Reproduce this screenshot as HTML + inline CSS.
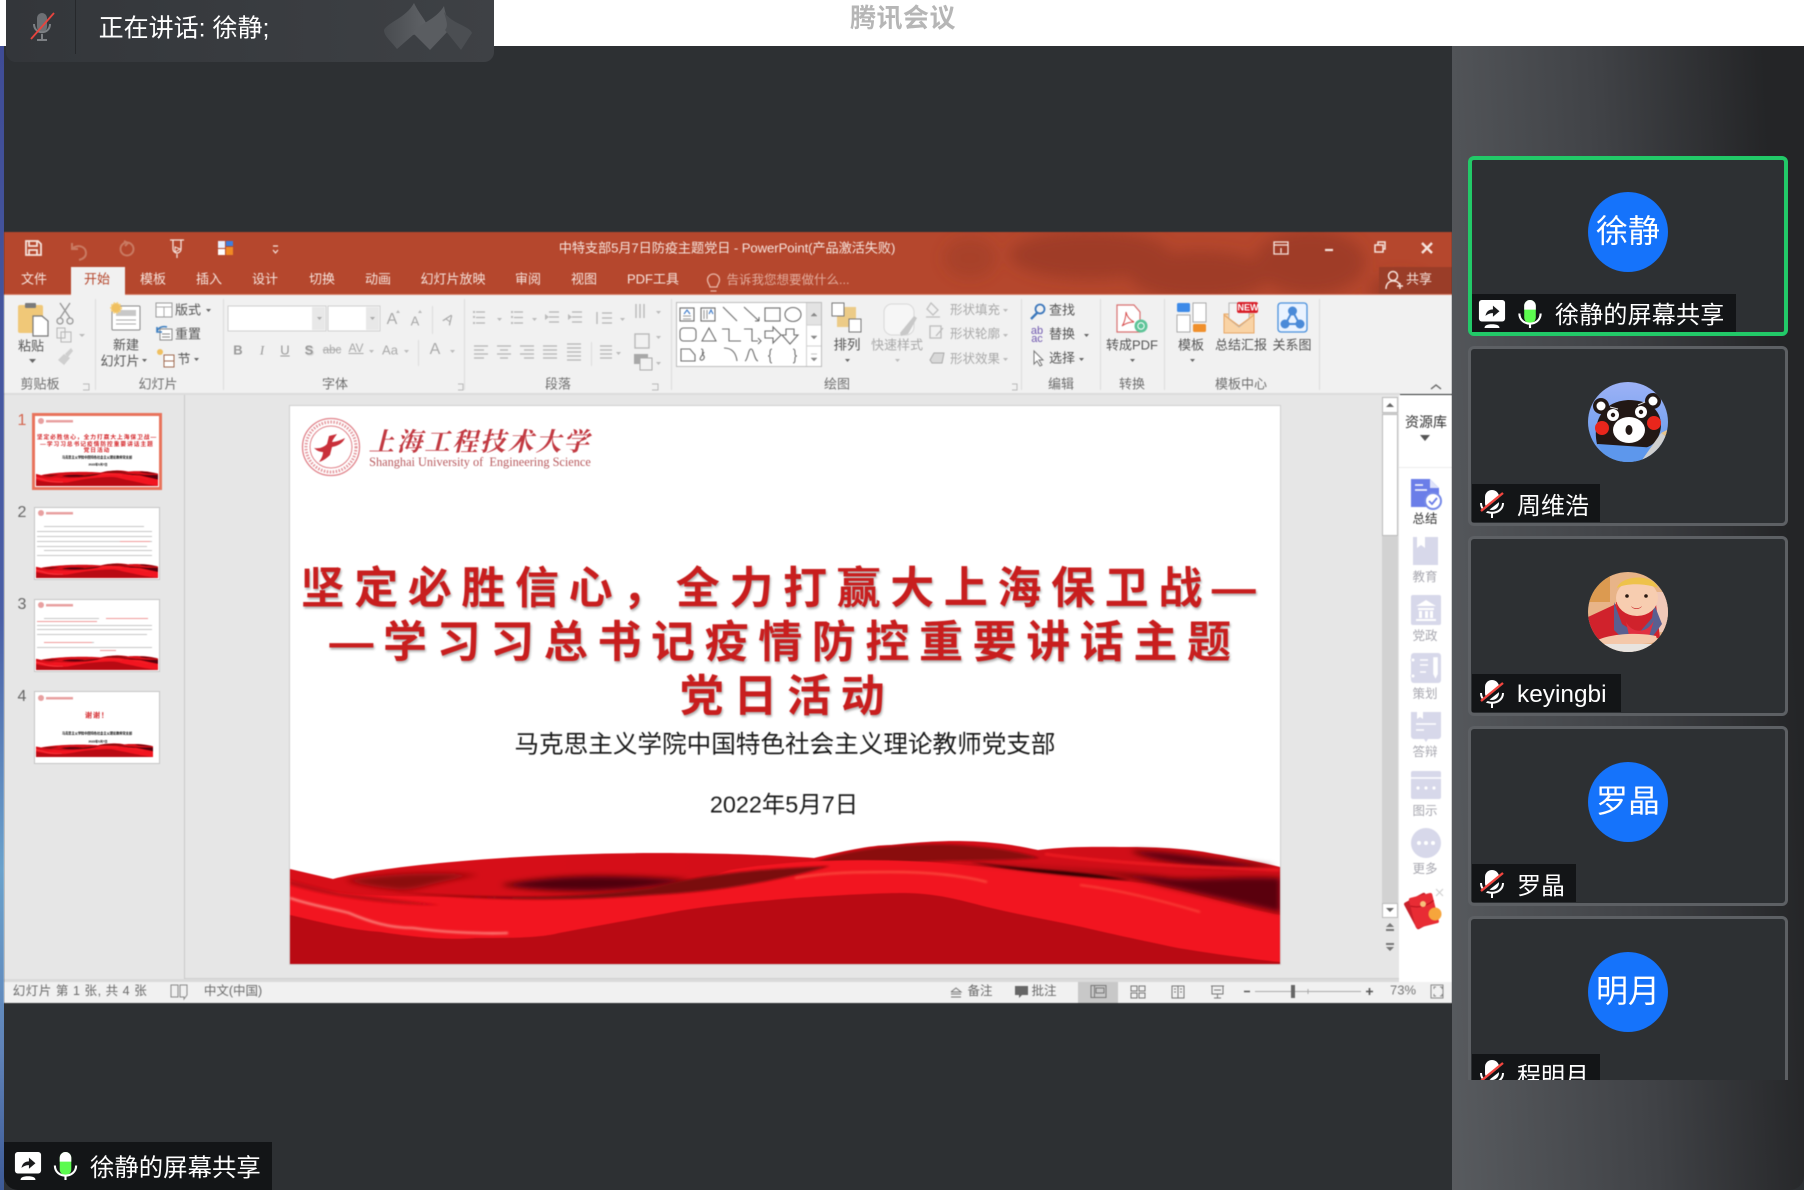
<!DOCTYPE html>
<html lang="zh-CN"><head><meta charset="utf-8"><title>腾讯会议</title>
<style>
html,body{margin:0;padding:0;background:#2d3033}
body{position:relative;width:1804px;height:1190px;overflow:hidden;font-family:"Liberation Sans","Noto Sans CJK SC",sans-serif}
.a{position:absolute}
.t{position:absolute;transform:translate(-50%,-50%);white-space:nowrap;line-height:1}
#ppt .t{font-size:13px;color:#555}
#ppt .g{color:#a9a9a9}
#ppt .w{color:#f6e3dc}
#ppt .l{font-size:13px;color:#6f6f6f}
.card{position:absolute;left:1468px;width:320px;height:180px;box-sizing:border-box;border:3px solid #5d6064;border-radius:6px;background:#2d3033}
.name{position:absolute;left:1472px;background:#131517;height:38px}
.n{position:absolute;transform:translateY(-50%);color:#fff;font-size:24px;white-space:nowrap;line-height:1}
.av{position:absolute;left:1588px;width:80px;height:80px;border-radius:50%;background:#1573fb;color:#fff;font-size:32px;text-align:center;line-height:78px}
</style></head><body>
<svg width="0" height="0" style="position:absolute"><defs>
<linearGradient id="up" x1="0" x2="1" y1="0" y2="0"><stop offset="0" stop-color="#d80f18"/><stop offset=".5" stop-color="#d40e18"/><stop offset="1" stop-color="#d00e18"/></linearGradient>
<filter id="b2" x="-30%" y="-100%" width="160%" height="300%"><feGaussianBlur stdDeviation="3"/></filter>
<filter id="b1" x="-20%" y="-100%" width="140%" height="300%"><feGaussianBlur stdDeviation="1"/></filter>
<filter id="b8" x="-20%" y="-50%" width="140%" height="200%"><feGaussianBlur stdDeviation="7"/></filter>
<symbol id="wave" viewBox="290 838 990 126" preserveAspectRatio="none">
<path d="M290 869L333 879C380 866 520 853 655 853C720 853 770 855 814 858C840 852 870 845 891 845C920 842 940 841 955 841C990 841 1015 845 1038 850C1070 846 1100 847 1127 847C1160 847 1190 849 1210 853C1240 858 1260 862 1280 867V964H290Z" fill="url(#up)"/>
<path d="M345 880C400 872 440 872 480 875C440 880 420 890 400 890C380 888 360 885 345 880Z" fill="#8c0810" filter="url(#b2)"/>
<path d="M500 885C560 874 610 874 690 880C640 892 560 895 500 885Z" fill="#4f0408" filter="url(#b2)"/>
<path d="M827 858C870 845 930 843 960 845C1000 848 1020 852 1040 858C990 862 930 858 880 866C850 872 820 885 780 892C760 893 800 870 827 858Z" fill="#8a0810" filter="url(#b1)"/>
<path d="M1130 851C1170 850 1210 860 1275 866C1230 870 1160 865 1130 851Z" fill="#5a0508" filter="url(#b2)"/>
<path d="M290 880C340 900 400 895 500 898C600 900 670 890 730 870C790 860 860 858 930 862C1000 868 1100 878 1150 884C1200 894 1240 908 1280 915V964H290Z" fill="#f21520"/>
<path d="M395 892C480 898 570 900 650 888C720 870 790 868 830 866C780 880 720 892 650 895C560 902 480 900 395 892Z" fill="#7a0810" filter="url(#b1)"/>
<path d="M955 862C1010 868 1100 870 1140 880C1170 888 1230 900 1280 912V878C1240 876 1200 880 1170 878C1100 870 1010 866 955 862Z" fill="#5a0508" filter="url(#b2)"/>
<path d="M970 862C1030 870 1080 870 1130 880C1090 878 1020 872 970 862Z" fill="#2a0204" filter="url(#b1)"/>
<path d="M1045 854C1100 862 1200 868 1280 870" stroke="#f01a20" stroke-width="2.500" fill="none" filter="url(#b1)"/>
<path d="M290 880L340 893L440 905C400 905 340 900 290 885Z" fill="#c00c14" filter="url(#b1)"/>
<path d="M290 915C320 922 350 930 381 932C420 938 450 940 476 938C510 938 540 938 559 933C600 925 630 920 668 913C710 905 750 902 795 898C840 895 880 893 904 893C935 893 960 900 987 907C1020 915 1050 920 1082 927C1115 935 1150 942 1178 948C1220 955 1260 960 1280 962V964H290Z" fill="#b90a13"/>
<path d="M290 898C310 905 330 908 349 913C370 922 390 928 413 928C440 932 480 934 508 933" stroke="#ffb4a4" stroke-width="1.600" fill="none" filter="url(#b1)"/>
<path d="M795 878C830 872 860 872 891 872C925 872 960 875 987 882" stroke="#ff6048" stroke-width="1.600" fill="none" filter="url(#b1)"/>
<path d="M1080 885C1120 890 1160 900 1200 912" stroke="#ff5a44" stroke-width="1.200" fill="none" filter="url(#b1)"/>
</symbol>
<symbol id="muted" viewBox="0 0 24 28">
<path d="M5 7a7 7 0 0 1 14 0v6a7 7 0 0 1-14 0Z" fill="#fff"/><path d="M1 13c0 13 22 13 22 0" stroke="#fff" stroke-width="2" fill="none"/><path d="M12 23v5" stroke="#fff" stroke-width="2"/><path d="M1 24L24 6" stroke="#131517" stroke-width="3.500"/><path d="M1 21L23 3" stroke="#f2453f" stroke-width="2.400"/>
</symbol>
<symbol id="share" viewBox="0 0 28 30">
<rect x="0" y="0" width="28" height="23" rx="3" fill="#fff"/><path d="M7 17c1-5 4-7 8-7V6l7 6-7 6v-4c-3 0-6 1-8 3Z" fill="#1a1b1d"/><path d="M6 30c0-3 3-4 8-4s8 1 8 4Z" fill="#fff"/>
</symbol>
<symbol id="mic" viewBox="0 0 24 29">
<path d="M6 6a6 6 0 0 1 12 0v12a6 6 0 0 1-12 0Z" fill="#5cfb4f"/><path d="M6 10V6a6 6 0 0 1 12 0v4Z" fill="#fff"/><path d="M1 14c0 14 22 14 22 0" stroke="#fff" stroke-width="2.200" fill="none"/><path d="M12 24v5" stroke="#fff" stroke-width="2.200"/>
</symbol>
</defs></svg>

<!-- top white / left edge -->
<div class="a" style="left:0;top:0;width:1804px;height:46px;background:#fff"></div>
<div class="a" style="left:0;top:46px;width:4px;height:1144px;background:linear-gradient(180deg,#3f4c96,#4b5fa6 50%,#6aa2cc 72%,#5f82b8 88%,#3d5a96)"></div>
<div class="t" style="left:903px;top:18px;font-size:26px;color:#b6b6b6;font-weight:700;letter-spacing:.5px">腾讯会议</div>

<!-- toast -->
<div class="a" style="left:6px;top:0;width:488px;height:62px;background:linear-gradient(90deg,#33363a,#3e4145);border-radius:0 0 10px 10px"></div>
<div class="a" style="left:75px;top:0;width:1px;height:54px;background:#26282b"></div>
<svg class="a" style="left:28px;top:10px" width="28" height="32" viewBox="0 0 28 32"><path d="M9 8a5 5 0 0 1 10 0v9a5 5 0 0 1-10 0Z" fill="#6d7074"/><path d="M6 14c0 11 16 11 16 0M14 24v5M9 30h10" stroke="#7d8084" stroke-width="2" fill="none"/><path d="M3 29L26 3" stroke="#e8443e" stroke-width="1.800"/></svg>
<div class="t" style="left:184px;top:29px;font-size:25px;color:#fff">正在讲话: 徐静;</div>
<svg class="a" style="left:380px;top:0" width="96" height="54" viewBox="380 0 96 54"><defs><linearGradient id="lf" x1="0" x2="1"><stop offset="0" stop-color="#484b4f"/><stop offset="1" stop-color="#606367"/></linearGradient></defs><path d="M414 3C420 16 430 24 428 32L413 35L397 49C390 40 384 36 384 30C388 22 406 18 414 3Z" fill="url(#lf)"/><path d="M444 6C446 18 450 22 449 30L430 50L413 33C418 24 436 20 444 6Z" fill="#5a5d61"/><path d="M444 12C452 24 470 26 472 33L461 50L445 30C449 26 446 20 444 12Z" fill="#4b4e52"/></svg>

<!-- PPT -->
<div id="ppt" class="a" style="left:0;top:0;width:1804px;height:1190px;filter:blur(.55px)">
<div class="a" style="left:4px;top:232px;width:1448px;height:62px;background:#b5472d;overflow:hidden"></div>
<svg class="a" style="left:0;top:232px" width="1452" height="62" viewBox="0 232 1452 62"><g fill="#9c3b26" filter="url(#b8)" opacity=".85"><ellipse cx="970" cy="258" rx="26" ry="20" opacity=".6"/><ellipse cx="1090" cy="255" rx="80" ry="24"/><ellipse cx="1200" cy="275" rx="70" ry="24"/><ellipse cx="1310" cy="262" rx="55" ry="32"/><ellipse cx="1400" cy="290" rx="30" ry="16"/></g></svg>
<div class="a" style="left:71px;top:267px;width:54px;height:28px;background:#f1f1f1"></div>
<div class="a" style="left:4px;top:294px;width:1448px;height:100px;background:#f1f1f1;border-top:1px solid #d8836f;box-sizing:border-box"></div>
<div class="a" style="left:71px;top:293px;width:54px;height:3px;background:#f1f1f1"></div>
<div class="a" style="left:1379px;top:267px;width:73px;height:27px;background:#9a3d28"></div>
<div class="a" style="left:4px;top:393px;width:1396px;height:589px;background:#e6e6e6;border-top:2px solid #dcdcdc;box-sizing:border-box"></div>
<div class="a" style="left:184px;top:395px;width:1px;height:584px;background:#c9c9c9"></div>
<div class="a" style="left:185px;top:978px;width:1214px;height:1px;background:#cfcfcf"></div>
<div class="a" style="left:4px;top:979px;width:1395px;height:3px;background:#dadada"></div>
<div class="a" style="left:4px;top:982px;width:1448px;height:21px;background:#f1f1f1"></div>
<div class="a" style="left:1399px;top:395px;width:53px;height:587px;background:#fff"></div>

<!-- title bar text -->
<div class="t w" style="left:727px;top:248px;font-size:13.200px;letter-spacing:-.1px">中特支部5月7日防疫主题党日 - PowerPoint(产品激活失败)</div>
<div class="t w" style="left:34px;top:279px">文件</div><div class="t" style="left:97px;top:279px;color:#b5472d">开始</div>
<div class="t w" style="left:153px;top:279px">模板</div><div class="t w" style="left:209px;top:279px">插入</div><div class="t w" style="left:265px;top:279px">设计</div><div class="t w" style="left:322px;top:279px">切换</div><div class="t w" style="left:378px;top:279px">动画</div><div class="t w" style="left:453px;top:279px">幻灯片放映</div><div class="t w" style="left:528px;top:279px">审阅</div><div class="t w" style="left:584px;top:279px">视图</div><div class="t w" style="left:653px;top:279px">PDF工具</div>
<div class="t" style="left:788px;top:280px;color:#e2ab9b;font-size:12.500px">告诉我您想要做什么...</div>
<div class="t w" style="left:1419px;top:279px">共享</div>

<!-- ribbon + chrome icons -->
<svg class="a" style="left:0;top:0" width="1452" height="1010" viewBox="0 0 1452 1010" fill="none">
<g stroke="#f6e3dc" stroke-width="1.800">
<path d="M26 241h12l3 3v11H26Z"/><path d="M29 241v5h8v-5M29 255v-5h8v5"/>
<path d="M1274 242h14v12h-14Z" stroke-width="1.300"/><path d="M1274 245h14M1281 253v-5" stroke-width="1.300"/>
<path d="M1325 250h8" stroke-width="2.200"/>
<path d="M1375 245h8v7h-8ZM1378 245v-3h7v7h-2" stroke-width="1.500"/>
<path d="M1422 243l10 10M1432 243l-10 10" stroke-width="2.400"/>
<path d="M170 240h14M173 240v9a4 4 0 0 0 8 0v-9M177 254v4" stroke-width="1.300"/><path d="M175 247l5 2-5 3Z" stroke-width="1"/>
<path d="M273 246h5M273 250l2.500 3 2.500-3" stroke-width="1.200"/>
<circle cx="1393" cy="276" r="4.500" stroke-width="1.500"/><path d="M1386 289c0-5 3-8 7-8s7 2 7 6M1397 286h6M1400 283v6" stroke-width="1.500"/>
</g>
<g stroke="#c97a62" stroke-width="2"><path d="M73 248c6-4 13-1 13 5 0 4-3 6-7 7M72 243v6h6"/><circle cx="127" cy="249" r="6.500"/><path d="M124 241l4 2-3 3"/></g>
<rect x="218" y="241" width="7" height="7" fill="#e8f0ff"/><rect x="226" y="241" width="7" height="5" fill="#3c7ee0"/><rect x="218" y="249" width="7" height="6" fill="#fff"/><rect x="226" y="247" width="7" height="8" fill="#f08a24"/>
<path d="M714 274a6 6 0 0 1 6 6c0 3-2 4-2.500 7h-7c-.500-3-2.500-4-2.500-7a6 6 0 0 1 6-6ZM711 291h6" stroke="#eab8a8" stroke-width="1.300" transform="translate(-.5 0)"/>

<!-- dividers -->
<g stroke="#dcdcdc"><path d="M95.500 299v91M223.500 299v91M464.500 299v91M671.500 299v91M1021.500 299v91M1100.500 299v91M1164.500 299v91M1319.500 299v91M432.500 306v28M418.500 340v26M591.500 342v24"/></g>
<!-- launchers -->
<g stroke="#a0a0a0"><path d="M83 384h6v6h-6M652 384h6v6h-6M458 384h5v6h-5M1012 384h5v6h-5" opacity=".7"/></g>

<!-- clipboard group -->
<rect x="18" y="305" width="25" height="28" rx="2" fill="#f0c878"/><rect x="25" y="303" width="11" height="5" rx="1" fill="#7a7a7a"/><path d="M33 316h9l6 5v15H33Z" fill="#fff" stroke="#777" stroke-width="1.200"/>
<path d="M60 303l10 15M70 303l-10 15" stroke="#999" stroke-width="1.400"/><circle cx="60" cy="321" r="3" stroke="#999" stroke-width="1.300"/><circle cx="70" cy="321" r="3" stroke="#999" stroke-width="1.300"/>
<path d="M57 328h8v10h-8ZM61 332h10v10H61Z" stroke="#b5b5b5" fill="#f1f1f1"/><path d="M79 334h6l-3 3Z" fill="#bbb"/>
<path d="M58 360l6-6 6 4-6 7ZM65 354l6-6 2 3-5 6" fill="#cfcfcf"/><path d="M29 359h7l-3.500 4Z" fill="#666"/>
<!-- slides group -->
<rect x="112" y="306" width="28" height="24" rx="1" fill="#fff" stroke="#888"/><rect x="116" y="310" width="20" height="6" fill="#c8c8c8"/><path d="M116 320h20M116 324h20" stroke="#aaa"/>
<circle cx="116" cy="308" r="5" fill="#f0c060" stroke="#f5d080" stroke-dasharray="1.500 1.500" stroke-width="2"/>
<rect x="156" y="303" width="16" height="14" fill="#fff" stroke="#999"/><path d="M156 307h16M164 307v10" stroke="#aaa"/>
<rect x="160" y="329" width="12" height="11" fill="#fff" stroke="#888"/><path d="M157 331c2-4 6-5 10-4M157 327v5h5" stroke="#3c7ec0" stroke-width="1.600"/><path d="M162 334h8M162 337h8" stroke="#888"/>
<circle cx="160" cy="352" r="3" fill="#f0c060"/><rect x="164" y="355" width="10" height="12" fill="#fff" stroke="#a06a50"/><path d="M164 361h10" stroke="#a06a50"/>
<path d="M206 309h5l-2.500 3ZM142 359h5l-2.500 3ZM194 358h5l-2.500 3Z" fill="#666"/>
<!-- font group -->
<rect x="228" y="306" width="98" height="25" fill="#fff" stroke="#d0d0d0"/><rect x="312" y="307" width="13" height="23" fill="#e8e8e8"/><rect x="328" y="306" width="52" height="25" fill="#fff" stroke="#d0d0d0"/><rect x="366" y="307" width="13" height="23" fill="#e8e8e8"/>
<path d="M317 317h5l-2.500 3ZM370 317h5l-2.500 3Z" fill="#aaa"/>
<path d="M369 350h5l-2.500 3ZM404 350h5l-2.500 3ZM450 350h5l-2.500 3ZM396 313l2-3 2 3ZM418 313l2-3 2 3ZM497 318h5l-2.500 3ZM532 318h5l-2.500 3ZM620 318h5l-2.500 3ZM656 311h5l-2.500 3ZM656 336h5l-2.500 3ZM616 352h5l-2.500 3ZM656 362h5l-2.500 3Z" fill="#bbb"/>
<!-- paragraph group -->
<g stroke="#b5b5b5" stroke-width="1.300"><path d="M476 312h9M476 317.500h9M476 323h9M514 312h9M514 317.500h9M514 323h9M549 312h10M549 317h10M549 322h10M572 312h10M572 317h10M572 322h10M602 313h10M602 318h10M602 323h10"/>
<path d="M474 346h14M474 350h10M474 354h14M474 358h10M497 346h14M500 350h8M497 354h14M500 358h8M520 346h14M524 350h10M520 354h14M524 358h10M543 346h14M543 350h14M543 354h14M543 358h14M567 344h14M567 348h14M567 352h14M567 356h14M567 360h14M600 346h12M600 350h12M600 354h12M600 358h12"/>
<path d="M597 312v12M636 304v14M640 304v14M644 304v14M635 334h14v14h-14Z"/></g>
<g fill="#bbb"><rect x="473" y="311" width="2" height="2"/><rect x="473" y="316" width="2" height="2"/><rect x="473" y="322" width="2" height="2"/><rect x="511" y="311" width="2" height="2"/><rect x="511" y="316" width="2" height="2"/><rect x="511" y="322" width="2" height="2"/><path d="M549 317l-4-3v6ZM568 314l4 3-4 3Z"/></g>
<rect x="634" y="354" width="14" height="10" fill="#a8a8a8"/><rect x="640" y="358" width="12" height="12" fill="#f1f1f1" stroke="#aaa"/>
<!-- shapes gallery -->
<rect x="676.500" y="302.500" width="145" height="64" fill="#fff" stroke="#bdbdbd"/><rect x="806" y="303" width="15" height="22" fill="#e3e3e3"/><path d="M806.500 303v63M806 325h15M806 346h15" stroke="#d0d0d0"/>
<path d="M811 316h6l-3-3ZM811 336h6l-3 3ZM811 354h6M811 358h6l-3 3Z" fill="#888" stroke="#888" stroke-width=".5"/>
<g stroke="#6e6e6e" stroke-width="1.100">
<rect x="680" y="308" width="14" height="13" fill="#fff"/><path d="M683 316h8M683 319h8" stroke="#999"/><path d="M684 314l3-4 3 4" stroke="#3a78c8"/>
<rect x="701" y="308" width="14" height="13"/><path d="M704 310v9M707 310v9" stroke="#999"/><path d="M709 314l2-4 2 4" stroke="#3a78c8"/>
<path d="M723 307l14 14M744 307l15 14M759 321v-4M759 321h-4"/><rect x="765" y="308" width="15" height="13"/><ellipse cx="793" cy="314.500" rx="8" ry="7"/>
<rect x="680" y="328" width="16" height="13" rx="3.500"/><path d="M709 328l-7 13h14ZM722 329h7v12h12M744 329h8v12h6M758 338l3 3-3 3M765 331h8v-4l8 8-8 8v-5h-8ZM786 329h8v6h4l-8 9-8-9h4Z"/>
<path d="M681 350h9l5 6v6h-14ZM701 350c4 0 0 5 2 6 3 2 0 6-2 5-3-1 2-5 3-8M724 349c8 0 12 5 13 13M745 362c3-1 3-12 6-12s3 11 7 12M772 350c-2 0-2 2-2 5 0 2-2 2-2 2s2 0 2 2c0 3 0 5 2 5M793 350c2 0 2 2 2 5 0 2 2 2 2 2s-2 0-2 2c0 3 0 5-2 5" transform="translate(0 -1)"/>
</g>
<!-- arrange -->
<rect x="837" y="307" width="19" height="20" fill="#eccb87"/><rect x="832" y="303" width="12" height="13" fill="#fff" stroke="#777"/><rect x="849" y="319" width="12" height="13" fill="#fff" stroke="#777"/>
<path d="M845 359h5l-2.500 3Z" fill="#666"/>
<rect x="884" y="304" width="30" height="31" rx="8" fill="#f6f6f6" stroke="#d8d8d8"/><path d="M900 333l14-17 3 2-9 16-7 2Z" fill="#c8c8c8"/><path d="M895 359h5l-2.500 3Z" fill="#bbb"/>
<path d="M931 303l7 7-5 5-6-6ZM926 317h14" stroke="#c0c0c0" stroke-width="1.300"/>
<path d="M930 326h11v12h-11ZM936 336l7-8" stroke="#bbb" stroke-width="1.300"/>
<path d="M930 360l4-7h10l-2 10h-10Z" fill="#d8d8d8" stroke="#aaa"/>
<path d="M1003 309h5l-2.500 3ZM1003 334h5l-2.500 3ZM1003 358h5l-2.500 3Z" fill="#bbb"/>
<!-- editing -->
<circle cx="1040" cy="309" r="4.500" stroke="#3d78bc" stroke-width="1.800"/><path d="M1037 313l-6 6" stroke="#3d78bc" stroke-width="2.400"/>
<path d="M1034 359l0 13 3-3 3 5 2-1-3-5h4Z" transform="translate(0 -8)" fill="#fff" stroke="#777"/>
<path d="M1084 334h5l-2.500 3ZM1079 358h5l-2.500 3Z" fill="#666"/>
<path d="M1117 305h17l6 7v20h-23Z" fill="#fff" stroke="#d87070" stroke-width="1.200"/><path d="M1122 326c3-4 4-11 4-14 1 5 4 8 8 10-4 0-8 1-12 4Z" stroke="#d85050"/><circle cx="1141" cy="326" r="6.500" fill="#5ec498"/><circle cx="1141" cy="326" r="3.200" stroke="#fff"/>
<path d="M1130 359h5l-2.500 3Z" fill="#666"/>
<!-- template -->
<rect x="1177" y="303" width="13" height="9" rx="1.500" fill="#3d8ae8"/><rect x="1193" y="303" width="13" height="19" fill="#fff" stroke="#aaa"/><rect x="1177" y="315" width="13" height="17" fill="#fff" stroke="#aaa"/><rect x="1193" y="324" width="13" height="8" rx="1.500" fill="#f0902c"/>
<path d="M1190 359h5l-2.500 3Z" fill="#666"/>
<rect x="1224" y="314" width="30" height="19" fill="#f9d3a5" stroke="#e8a868"/><path d="M1229 303h20v16l-10 8-10-8Z" fill="#f3f3f3" stroke="#b8b8b8"/><path d="M1224 315l15 11 15-11" stroke="#e8a868" stroke-width="1.300"/>
<rect x="1237" y="302" width="21" height="11" rx="2" fill="#d81e28"/>
<rect x="1278" y="303" width="29" height="29" rx="3" fill="#eaf3ff" stroke="#4a90dc" stroke-width="1.300"/><path d="M1292.500 311l-7 13h14Z" stroke="#4a8ad8" stroke-width="2"/><circle cx="1292.500" cy="311" r="4.500" fill="#4a8ad8"/><circle cx="1285" cy="324" r="4.500" fill="#4a8ad8"/><circle cx="1300" cy="324" r="4.500" fill="#4a8ad8"/>
<path d="M1431 389l5-4 5 4" stroke="#666" stroke-width="1.400"/>
<!-- scroll -->
<rect x="1382" y="397" width="16" height="520" fill="#d2d2d2"/><rect x="1382.500" y="397.500" width="15" height="15" fill="#fff" stroke="#bbb"/><rect x="1382.500" y="414.500" width="15" height="121" fill="#fff" stroke="#bbb"/><rect x="1382.500" y="903.500" width="15" height="14" fill="#fff" stroke="#bbb"/>
<path d="M1386 407h8l-4-4ZM1386 908h8l-4 4Z" fill="#666"/><path d="M1386 927h8l-4-4ZM1386 929h8v2h-8ZM1386 943h8v2h-8ZM1386 947h8l-4 4Z" fill="#777"/>
<!-- status icons -->
<g stroke="#888"><path d="M171 985h7v12h-7ZM180 985h7v10l-3 4v-2h-4Z" fill="none"/><path d="M951 992l5-4 5 4h-10M951 994h10M951 997h10" stroke="#777"/></g>
<path d="M1015 986h13v9h-6l-3 3v-3h-4Z" fill="#666"/>
<rect x="1078" y="982" width="40" height="21" fill="#c8c8c8"/>
<path d="M1091 985.500h15v12h-15ZM1094.500 985.500v12M1096 988h8v5h-8ZM1131 986h6v5h-6ZM1139 986h6v5h-6ZM1131 993h6v5h-6ZM1139 993h6v5h-6ZM1172 986h12v12h-12ZM1178 986v12M1174 989h2M1174 992h2M1180 989h2M1180 992h2M1211 986h13M1212 986v8h11v-8M1217.500 994v4M1214 998h7M1214 990h7" stroke="#777" fill="none"/>
<path d="M1244 991.500h6M1366 991.500h7M1369.500 988v7" stroke="#555" stroke-width="1.600"/><path d="M1255 991.500h106M1308 989v5" stroke="#aaa"/><rect x="1291" y="985" width="4" height="13" fill="#666"/>
<path d="M1431 985h12v13h-12ZM1434 989v-2h2M1440 987h2v2M1434 994v2h2M1442 994v2h-2" stroke="#888"/>
</svg>

<!-- ribbon labels -->
<div class="t l" style="left:40px;top:384px">剪贴板</div><div class="t l" style="left:158px;top:384px">幻灯片</div><div class="t l" style="left:335px;top:384px">字体</div><div class="t l" style="left:558px;top:384px">段落</div><div class="t l" style="left:837px;top:384px">绘图</div><div class="t l" style="left:1061px;top:384px">编辑</div><div class="t l" style="left:1132px;top:384px">转换</div><div class="t l" style="left:1241px;top:384px">模板中心</div>
<div class="t" style="left:31px;top:346px">粘贴</div><div class="t" style="left:126px;top:345px">新建</div><div class="t" style="left:120px;top:361px">幻灯片</div>
<div class="t" style="left:188px;top:310px">版式</div><div class="t" style="left:188px;top:334px">重置</div><div class="t" style="left:184px;top:359px">节</div>
<div class="t g" style="left:392px;top:320px;font-size:16px">A</div><div class="t g" style="left:415px;top:321px;font-size:13px">A</div><div class="t g" style="left:449px;top:319px;font-size:14px;transform:translate(-50%,-50%) rotate(35deg)">A</div>
<div class="t g" style="left:238px;top:350px;font-weight:700;color:#999">B</div><div class="t g" style="left:262px;top:350px;font-style:italic;font-family:'Liberation Serif';color:#999">I</div><div class="t g" style="left:285px;top:350px;color:#999;text-decoration:underline">U</div><div class="t g" style="left:309px;top:350px;font-weight:700;color:#999;text-shadow:1px 1px 1px #ccc">S</div><div class="t g" style="left:332px;top:351px;font-size:11.500px;text-decoration:line-through">abc</div><div class="t g" style="left:356px;top:348px;font-size:12px;text-decoration:underline">AV</div><div class="t g" style="left:390px;top:350px">Aa</div><div class="t g" style="left:435px;top:350px;font-size:16px">A</div>
<div class="t" style="left:847px;top:345px;font-size:13.500px">排列</div><div class="t g" style="left:897px;top:345px">快速样式</div>
<div class="t g" style="left:975px;top:310px;font-size:12.500px">形状填充</div><div class="t g" style="left:975px;top:334px;font-size:12.500px">形状轮廓</div><div class="t g" style="left:975px;top:359px;font-size:12.500px">形状效果</div>
<div class="t" style="left:1062px;top:310px">查找</div><div class="t" style="left:1062px;top:334px">替换</div><div class="t" style="left:1062px;top:358px">选择</div>
<div class="t" style="left:1037px;top:335px;font-size:11px;line-height:8px;color:#7058b0;white-space:normal;width:14px;text-align:center">ab<br>ac</div>
<div class="t" style="left:1132px;top:345px;font-size:13px">转成PDF</div><div class="t" style="left:1191px;top:345px">模板</div><div class="t" style="left:1241px;top:345px">总结汇报</div><div class="t" style="left:1292px;top:345px">关系图</div>
<div class="t" style="left:1248px;top:308px;font-size:9px;color:#fff;font-weight:700">NEW</div>

<!-- thumbnails -->
<div class="t" style="left:22px;top:421px;font-size:16px;color:#d4654e">1</div><div class="t" style="left:22px;top:513px;font-size:16px;color:#666">2</div><div class="t" style="left:22px;top:605px;font-size:16px;color:#666">3</div><div class="t" style="left:22px;top:697px;font-size:16px;color:#666">4</div>
<div class="a" style="left:32px;top:413px;width:130px;height:77px;box-sizing:border-box;border:3px solid #e8735c;background:#fff"></div>
<div class="a" style="left:34px;top:507px;width:126px;height:73px;box-sizing:border-box;border:1px solid #c6c6c6;background:#fff"></div>
<div class="a" style="left:34px;top:599px;width:126px;height:73px;box-sizing:border-box;border:1px solid #c6c6c6;background:#fff"></div>
<div class="a" style="left:34px;top:691px;width:126px;height:73px;box-sizing:border-box;border:1px solid #c6c6c6;background:#fff"></div>
<svg class="a" style="left:36px;top:470px" width="122" height="16"><use href="#wave" width="122" height="16"/></svg>
<svg class="a" style="left:36px;top:563px" width="122" height="15"><use href="#wave" width="122" height="15"/></svg>
<svg class="a" style="left:36px;top:655px" width="122" height="15"><use href="#wave" width="122" height="15"/></svg>
<svg class="a" style="left:36px;top:743px" width="117" height="14"><use href="#wave" width="117" height="14"/></svg>
<svg class="a" style="left:0;top:410px" width="170" height="360" viewBox="0 410 170 360">
<g fill="#e8a0a0"><circle cx="41" cy="421" r="3"/><rect x="46" y="420" width="27" height="2.500"/><circle cx="41" cy="513" r="3"/><rect x="46" y="512" width="27" height="2.500"/><circle cx="41" cy="605" r="3"/><rect x="46" y="604" width="27" height="2.500"/><circle cx="41" cy="698" r="3"/><rect x="46" y="697" width="27" height="2.500"/></g>
<g fill="#c6c6c6"><rect x="44" y="526" width="100" height="1"/><rect x="37" y="531" width="115" height="1"/><rect x="37" y="536" width="115" height="1"/><rect x="37" y="541" width="115" height="1"/><rect x="37" y="546" width="110" height="1"/><rect x="44" y="550" width="108" height="1"/><rect x="37" y="555" width="115" height="1"/><rect x="44" y="618" width="55" height="1"/><rect x="37" y="625" width="115" height="1"/><rect x="37" y="629" width="115" height="1"/><rect x="37" y="634" width="110" height="1"/><rect x="44" y="642" width="50" height="1"/><rect x="37" y="647" width="115" height="1"/></g>
<g fill="#ef9a9a"><rect x="120" y="541" width="30" height="1"/><rect x="106" y="618" width="42" height="1"/><rect x="37" y="621" width="60" height="1"/><rect x="44" y="642" width="48" height="1"/><rect x="100" y="650" width="16" height="1"/></g></svg>
<div class="t" style="left:97px;top:439px;font-size:5.700px;color:#d4262a;font-weight:700;letter-spacing:1px">坚定必胜信心，全力打赢大上海保卫战—</div>
<div class="t" style="left:97px;top:446px;font-size:5.700px;color:#d4262a;font-weight:700;letter-spacing:1px">—学习习总书记疫情防控重要讲话主题</div>
<div class="t" style="left:97px;top:452px;font-size:5.700px;color:#d4262a;font-weight:700;letter-spacing:1px">党日活动</div>
<div class="t" style="left:97px;top:458px;font-size:3.200px;color:#000;font-weight:700">马克思主义学院中国特色社会主义理论教师党支部</div>
<div class="t" style="left:98px;top:465px;font-size:3px;color:#000;font-weight:700">2022年5月7日</div>
<div class="t" style="left:97px;top:716px;font-size:7px;color:#d4262a;font-weight:700;letter-spacing:1px">谢谢！</div>
<div class="t" style="left:97px;top:734px;font-size:3.200px;color:#000;font-weight:700">马克思主义学院中国特色社会主义理论教师党支部</div>
<div class="t" style="left:98px;top:742px;font-size:3px;color:#000;font-weight:700">2022年5月7日</div>

<!-- main slide -->
<div class="a" style="left:290px;top:406px;width:990px;height:558px;background:#fff;box-shadow:0 0 0 1px #cfcfcf"></div>
<svg class="a" style="left:290px;top:838px" width="990" height="126"><use href="#wave" width="990" height="126"/></svg>
<svg class="a" style="left:298px;top:414px" width="66" height="66" viewBox="0 0 66 66" fill="none"><circle cx="33" cy="33" r="28.500" stroke="#e08088" stroke-width="1.300"/><circle cx="33" cy="33" r="25" stroke="#e4959b" stroke-width="3" stroke-dasharray="1.500 1.500"/><circle cx="33" cy="33" r="21" stroke="#e08088"/><path d="M16 34c6 1 10-1 13-4l2-8 8-2c-2 3-4 5-5 8 4 0 9-2 13-4-2 5-7 8-13 9l-2 8c-3 3-7 6-11 7 2-3 4-6 4-10-3 0-6-1-9-4Z" fill="#c9303a"/></svg>
<div class="t" style="left:480px;top:441px;font-size:25.500px;font-family:'Noto Serif CJK SC',serif;font-weight:700;color:#c23a42;letter-spacing:2.300px;font-style:italic">上海工程技术大学</div>
<div class="t" style="left:480px;top:462px;font-size:12.300px;font-family:'Liberation Serif',serif;color:#b85a5e">Shanghai University of&nbsp; Engineering Science</div>
<div class="t" style="left:783px;top:589px;font-size:44px;font-weight:700;color:#c81e1e;letter-spacing:9.600px;text-shadow:1px 2px 2px rgba(0,0,0,.3)">坚定必胜信心，全力打赢大上海保卫战—</div>
<div class="t" style="left:785px;top:643px;font-size:44px;font-weight:700;color:#c81e1e;letter-spacing:9.600px;text-shadow:1px 2px 2px rgba(0,0,0,.3)">—学习习总书记疫情防控重要讲话主题</div>
<div class="t" style="left:787px;top:697px;font-size:44px;font-weight:700;color:#c81e1e;letter-spacing:9.600px;text-shadow:1px 2px 2px rgba(0,0,0,.3)">党日活动</div>
<div class="t" style="left:785px;top:746px;font-size:24.600px;color:#1a1a1a">马克思主义学院中国特色社会主义理论教师党支部</div>
<div class="t" style="left:784px;top:805px;font-size:23.400px;color:#1a1a1a">2022年5月7日</div>

<!-- resource rail -->
<div class="t" style="left:1426px;top:422px;font-size:14px;color:#333">资源库</div>
<div class="a" style="left:1399px;top:467px;width:53px;height:1px;background:#ececec"></div>
<svg class="a" style="left:1400px;top:430px" width="52" height="500" viewBox="1400 430 52 500">
<path d="M1420 435h10l-5 6Z" fill="#555"/>
<path d="M1411 479h19l9 9v19h-28Z" fill="#6b7ee8"/><path d="M1430 479v9h9Z" fill="#dfe3fa"/><circle cx="1433" cy="501" r="8" fill="#fff" stroke="#7488e8" stroke-width="2"/><path d="M1429 501l3 3 5-6" stroke="#6b7ee8" stroke-width="1.800" fill="none"/><path d="M1415 485h8M1415 490h12" stroke="#fff" stroke-width="1.500"/>
<g fill="#d7d8ea">
<path d="M1413 537h25v28h-25Z"/><path d="M1417 537h8v11l-4-3-4 3Z" fill="#fff"/>
<rect x="1411" y="595" width="30" height="30" rx="2"/>
<rect x="1411" y="653" width="30" height="30" rx="3"/>
<path d="M1411 712h30v24a3 3 0 0 1-3 3h-10l-2 3-2-3h-10a3 3 0 0 1-3-3Z"/>
<rect x="1411" y="771" width="30" height="28" rx="2"/>
<circle cx="1426" cy="843" r="15"/></g>
<path d="M1426 600l10 6h-20ZM1418 608h16v2h-16ZM1419 611h3v7h-3ZM1425 611h3v7h-3ZM1430 611h3v7h-3ZM1416 619h20v2h-20Z" fill="#fff"/>
<path d="M1420 660h8M1420 665h8M1420 672h6M1434 658v16l1.500 3 1.500-3v-16Z" stroke="#fff" stroke-width="1.500" fill="#fff"/><circle cx="1413" cy="660" r="2" fill="#fff" stroke="#d7d8ea"/><circle cx="1413" cy="676" r="2" fill="#fff" stroke="#d7d8ea"/>
<path d="M1417 712v7l3-2 3 2v-7Z" fill="#fff"/><path d="M1416 724h20M1416 730h8" stroke="#fff" stroke-width="1.500"/>
<path d="M1411 778h30" stroke="#fff" stroke-width="1.500"/><circle cx="1418" cy="788" r="1.600" fill="#fff"/><circle cx="1426" cy="788" r="1.600" fill="#fff"/><circle cx="1434" cy="788" r="1.600" fill="#fff"/>
<circle cx="1419" cy="843" r="2" fill="#fff"/><circle cx="1426" cy="843" r="2" fill="#fff"/><circle cx="1433" cy="843" r="2" fill="#fff"/>
<g transform="rotate(-28 1421 911)"><rect x="1409" y="896" width="24" height="30" rx="2" fill="#c8202a"/></g><g transform="rotate(-14 1424 911)"><rect x="1412" y="895" width="24" height="31" rx="2" fill="#e82c34"/><path d="M1412 903q12 6 24 0" stroke="#b5121c" fill="none"/></g><circle cx="1423" cy="904" r="3" fill="#f7c07a"/><circle cx="1435" cy="914" r="6.500" fill="#f6a53c"/>
<path d="M1436 889l7 7M1443 889l-7 7" stroke="#d0d0d0" stroke-width="1.200"/>
</svg>
<div class="t" style="left:1425px;top:519px;font-size:12.500px;color:#333">总结</div><div class="t" style="left:1425px;top:577px;font-size:12.500px;color:#a8a8b0">教育</div><div class="t" style="left:1425px;top:636px;font-size:12.500px;color:#a8a8b0">党政</div><div class="t" style="left:1425px;top:694px;font-size:12.500px;color:#a8a8b0">策划</div><div class="t" style="left:1425px;top:752px;font-size:12.500px;color:#a8a8b0">答辩</div><div class="t" style="left:1425px;top:811px;font-size:12.500px;color:#a8a8b0">图示</div><div class="t" style="left:1425px;top:869px;font-size:12.500px;color:#a8a8b0">更多</div>

<!-- status -->
<div class="t" style="left:80px;top:991px;font-size:12.500px;color:#6a6a6a;letter-spacing:.55px">幻灯片 第 1 张, 共 4 张</div>
<div class="t" style="left:233px;top:991px;font-size:12.500px;color:#6a6a6a">中文(中国)</div>
<div class="t" style="left:980px;top:991px;font-size:12.500px;color:#6a6a6a">备注</div><div class="t" style="left:1044px;top:991px;font-size:12.500px;color:#6a6a6a">批注</div><div class="t" style="left:1403px;top:990px;font-size:13px;color:#777">73%</div>
</div>

<!-- sidebar -->
<div class="a" style="left:1452px;top:46px;width:352px;height:1144px;background:linear-gradient(87deg,#585b5f 0,#404246 50%,#242527 90%);border-bottom-right-radius:14px"></div>
<div class="card" style="top:156px;border:4px solid #22c968"></div>
<div class="card" style="top:346px"></div>
<div class="card" style="top:536px"></div>
<div class="card" style="top:726px"></div>
<div class="a" style="left:1468px;top:916px;width:320px;height:164px;overflow:hidden"><div class="card" style="left:0;top:0"></div></div>

<div class="av" style="top:192px">徐静</div>
<svg class="a" style="left:1588px;top:382px;border-radius:50%" width="80" height="80" viewBox="-40 -40 80 80">
<defs><linearGradient id="kb" x1="0" x2="0" y1="0" y2="1"><stop offset="0" stop-color="#9db2f6"/><stop offset="1" stop-color="#5d97ec"/></linearGradient></defs>
<rect x="-40" y="-40" width="80" height="80" fill="url(#kb)"/>
<circle cx="-27" cy="-16" r="8" fill="#221815"/><circle cx="-27" cy="-16" r="4.500" fill="#fff"/><circle cx="25" cy="-21" r="8" fill="#221815"/><circle cx="25" cy="-21" r="4.500" fill="#fff"/>
<path d="M-31 22C-35 5-30-20 0-22C28-22 36-5 32 10C28 25 18 28-5 28Z" fill="#221815"/>
<path d="M-30 22L30 26L15 40H-20Z" fill="#5d97ec"/>
<path d="M14 38L33 11L39 15L23 40Z" fill="#cfcfcf"/><path d="M33 11L39 8L39 15Z" fill="#e8c48a"/>
<circle cx="-15" cy="-7" r="6" fill="#fff"/><circle cx="-15" cy="-7" r="2.200" fill="#221815"/><circle cx="13" cy="-10" r="6" fill="#fff"/><circle cx="13" cy="-10" r="2.200" fill="#221815"/>
<circle cx="-26" cy="6" r="7" fill="#e8261c"/><circle cx="26" cy="1" r="7" fill="#e8261c"/>
<ellipse cx="1" cy="8" rx="16" ry="13" fill="#fff"/><ellipse cx="1" cy="8" rx="3.500" ry="5" fill="#221815"/>
<path d="M-18-15l8 2M10-17l7-3" stroke="#ddd" stroke-width="1"/>
</svg>
<svg class="a" style="left:1588px;top:572px;border-radius:50%" width="80" height="80" viewBox="-40 -40 80 80">
<rect x="-40" y="-40" width="80" height="80" fill="#e8b488"/><rect x="-40" y="-40" width="22" height="30" fill="#dc9a50"/><rect x="28" y="-20" width="12" height="40" fill="#f0c8b8"/>
<path d="M-40 5L-12-8L-8 28H-40Z" fill="#d0222c"/><path d="M-12-10L28-8L32 26H-10Z" fill="#d0222c"/><path d="M-14-10L-6 12L10 22L24 6L26-8L34 12L22 28H-4L-14 18Z" fill="#5a5f90"/><path d="M-2 10C4 22 20 22 26 8L20 28H2Z" fill="#e23040"/>
<ellipse cx="9" cy="-14" rx="21" ry="18" fill="#f7cdb0"/><path d="M-11-24C-8-36 24-40 30-24C20-28 0-30-11-24Z" fill="#eec24a"/>
<circle cx="-1" cy="-16" r="1.800" fill="#2a1a12"/><circle cx="18" cy="-16" r="1.800" fill="#2a1a12"/><path d="M3-6c3 3 8 3 11 0-2 4-9 4-11 0Z" fill="#c33"/>
<path d="M-30 28c12-6 40-8 58-4l2 6c-16 2-40 6-60 2Z" fill="#f4c8aa"/><path d="M-40 32h80v8h-80Z" fill="#e8e4e0"/>
</svg>
<div class="av" style="top:762px">罗晶</div>

<div class="name" style="top:294px;width:264px"></div>
<svg class="a" style="left:1478px;top:300px" width="28" height="28"><use href="#share" width="28" height="28"/></svg>
<svg class="a" style="left:1518px;top:300px" width="24" height="28"><use href="#mic" width="24" height="28"/></svg>
<div class="n" style="left:1555px;top:316px;letter-spacing:.2px">徐静的屏幕共享</div>
<div class="name" style="top:484px;width:128px"></div>
<svg class="a" style="left:1480px;top:490px" width="24" height="28"><use href="#muted" width="24" height="28"/></svg>
<div class="n" style="left:1517px;top:507px">周维浩</div>
<div class="name" style="top:674px;width:149px"></div>
<svg class="a" style="left:1480px;top:680px" width="24" height="28"><use href="#muted" width="24" height="28"/></svg>
<div class="n" style="left:1517px;top:695px;font-size:24.400px">keyingbi</div>
<div class="name" style="top:864px;width:104px"></div>
<svg class="a" style="left:1480px;top:870px" width="24" height="28"><use href="#muted" width="24" height="28"/></svg>
<div class="n" style="left:1517px;top:887px">罗晶</div>

<div class="a" style="left:1468px;top:916px;width:320px;height:164px;overflow:hidden">
<div class="av" style="left:120px;top:36px">明月</div>
<div class="name" style="left:4px;top:138px;width:128px"></div>
<svg class="a" style="left:12px;top:144px" width="24" height="28"><use href="#muted" width="24" height="28"/></svg>
<div class="n" style="left:49px;top:161px">程明月</div>
</div>

<!-- bottom-left share label -->
<div class="a" style="left:4px;top:1142px;width:268px;height:48px;background:#131517;border-bottom-left-radius:14px"></div>
<svg class="a" style="left:14px;top:1152px" width="28" height="28"><use href="#share" width="28" height="28"/></svg>
<svg class="a" style="left:53px;top:1152px" width="25" height="28"><use href="#mic" width="25" height="28"/></svg>
<div class="n" style="left:90px;top:1169px;font-size:24.400px">徐静的屏幕共享</div>
</body></html>
